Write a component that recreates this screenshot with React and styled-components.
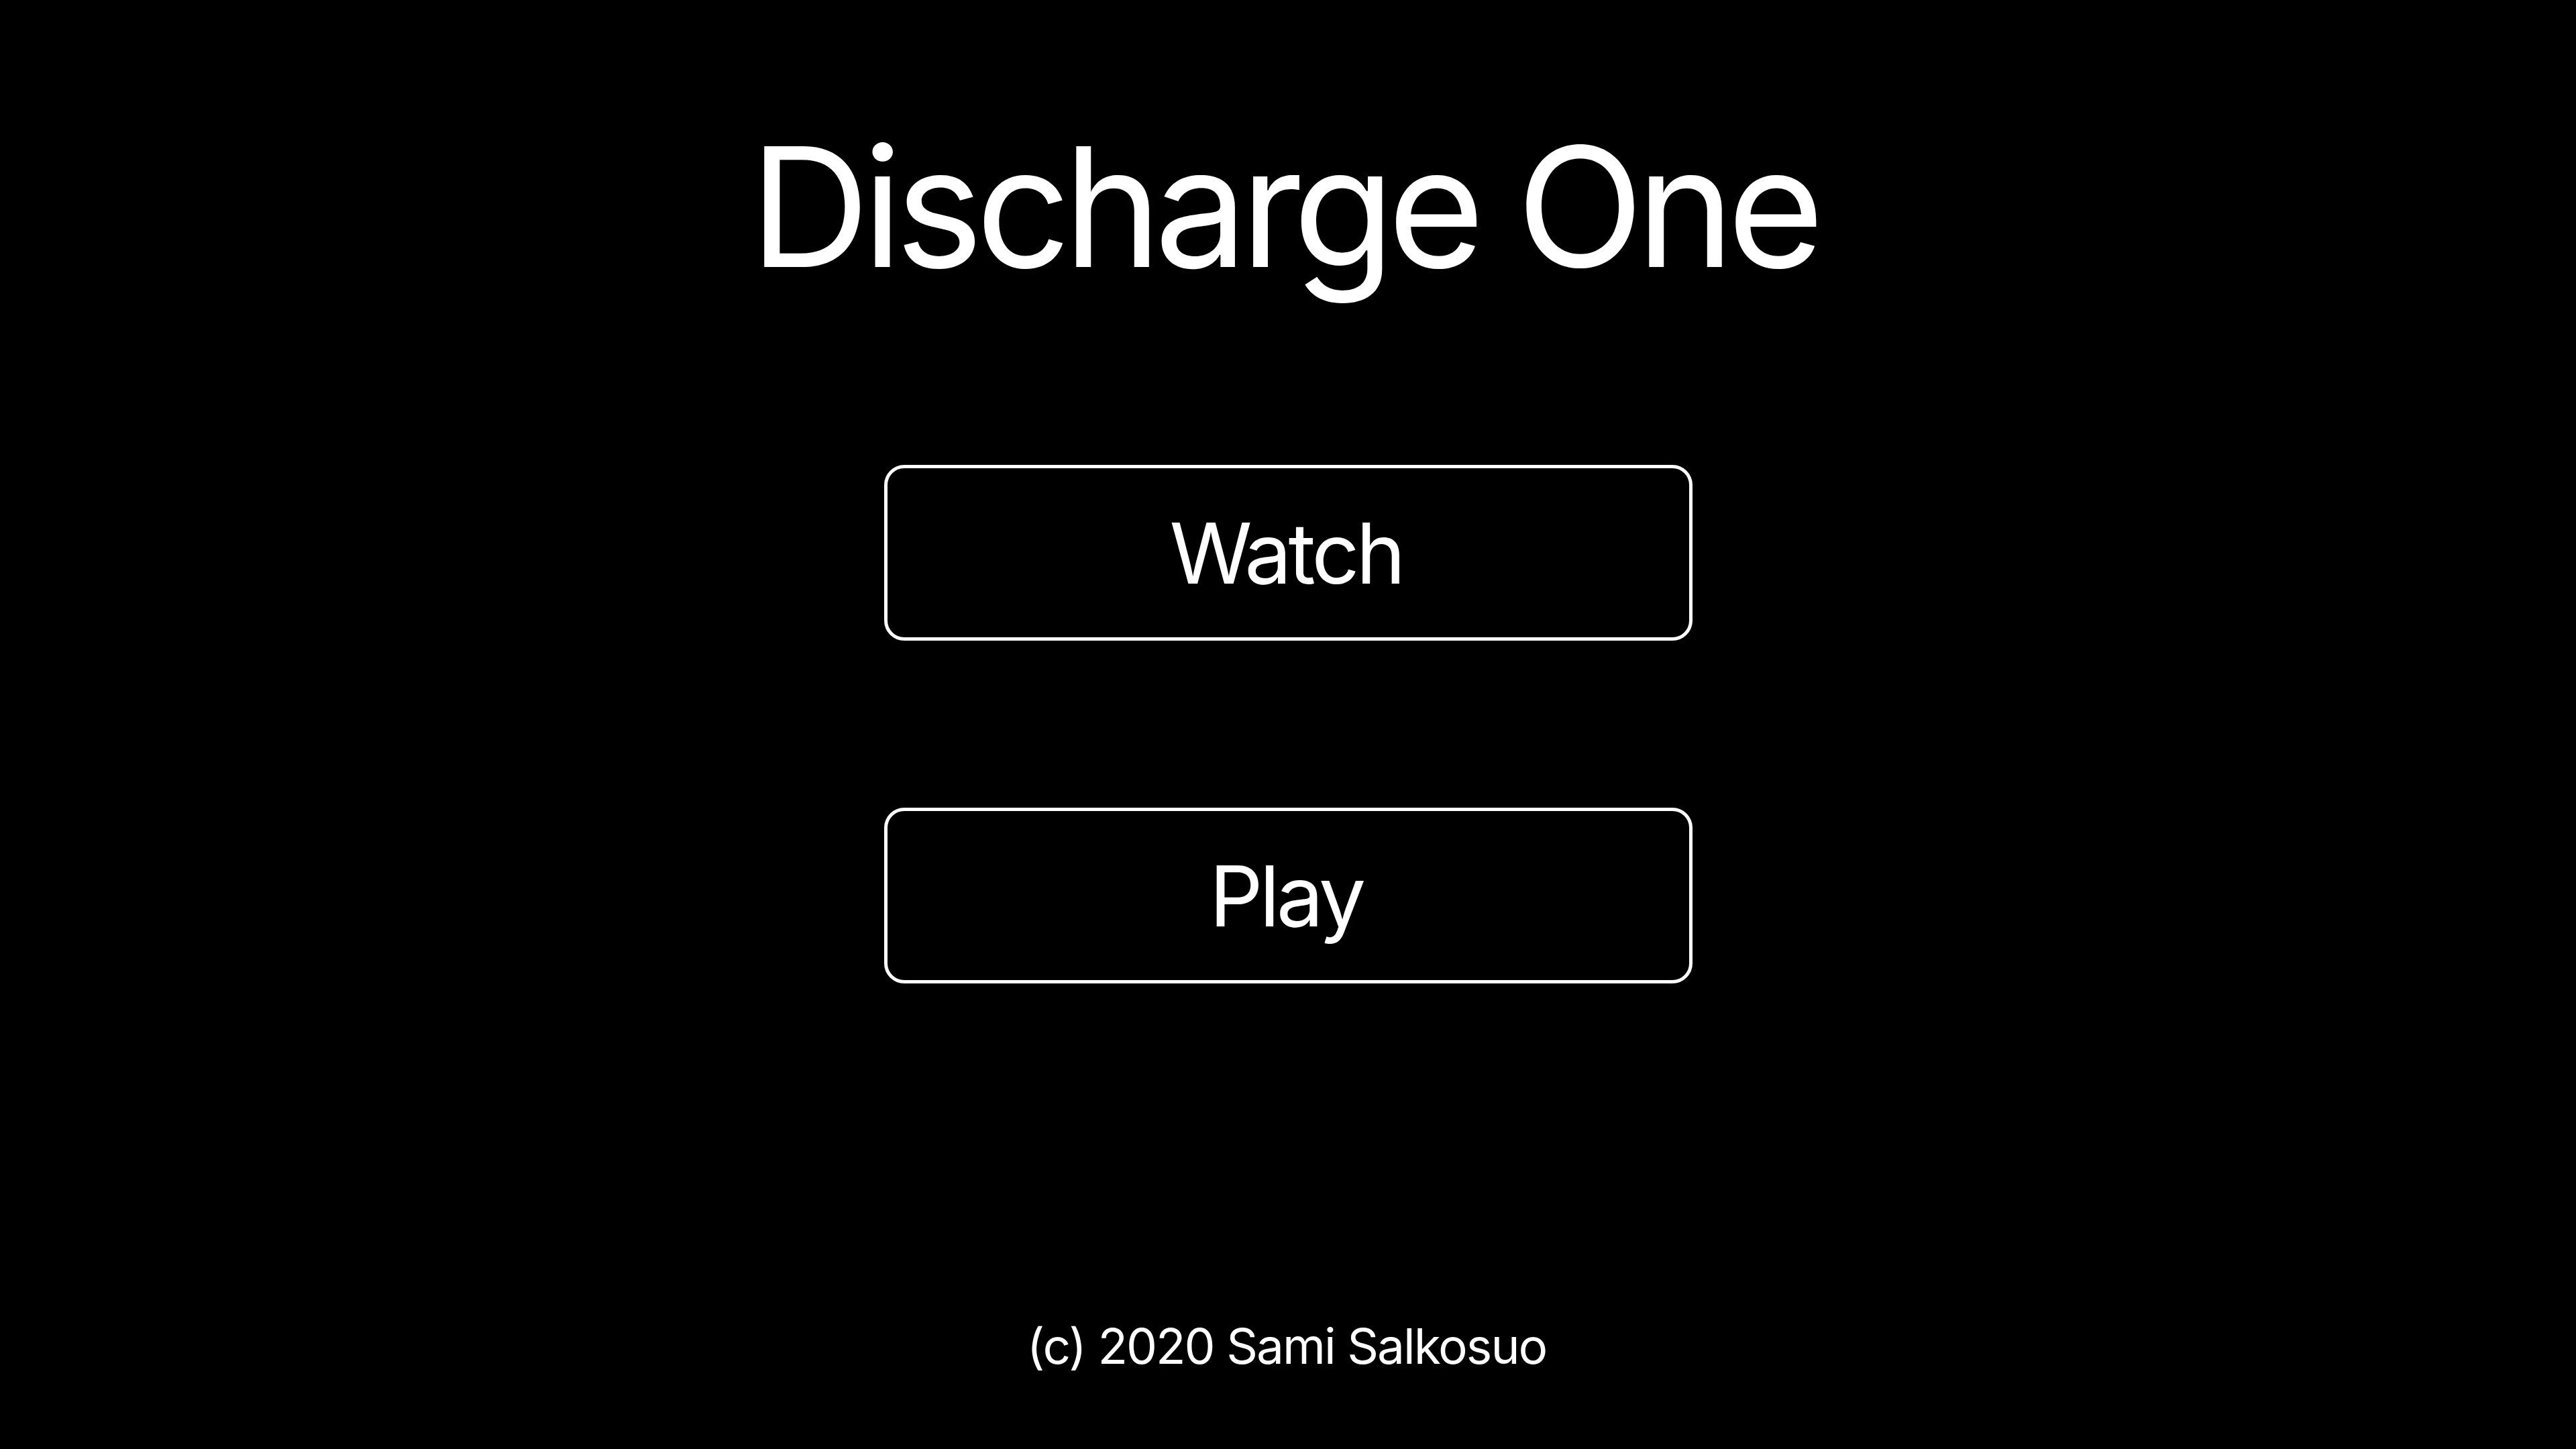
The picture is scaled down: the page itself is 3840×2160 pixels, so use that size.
import React from "react";
import styled, { createGlobalStyle } from "styled-components";

const GlobalStyle = createGlobalStyle`
  html, body {
    margin: 0;
    padding: 0;
    background-color: #000;
  }
  body {
    font-family: Inter, "Noto Sans", "Liberation Sans", sans-serif;
    color: #fff;
  }
`;

const StyledPage = styled.div`
  min-height: 100vh;
  display: flex;
  flex-direction: column;
  align-items: center;
  box-sizing: border-box;
  padding: 184px 0 117px;
`;

const StyledTitle = styled.h1`
  margin: 0;
  padding-right: 14px;
  font-size: 248px;
  line-height: 248px;
  font-weight: 400;
  letter-spacing: -11px;
`;

const StyledMenu = styled.div`
  display: flex;
  flex-direction: column;
  gap: 249px;
  margin-top: 261px;
`;

const StyledButton = styled.button`
  width: 1205px;
  height: 262px;
  box-sizing: border-box;
  display: flex;
  align-items: center;
  justify-content: center;
  background: #000;
  color: #fff;
  border: 5px solid #fff;
  border-radius: 30px;
  font-family: inherit;
  font-size: 125px;
  font-weight: 400;
  letter-spacing: -5px;
  cursor: pointer;
  padding: 0 6px 0 0;
  transition: all 0.2s;
  &:hover {
    background: #111;
  }
`;

const StyledFooter = styled.p`
  margin: auto 0 0;
  padding-right: 4px;
  font-size: 73px;
  line-height: 73px;
  font-weight: 400;
  letter-spacing: -2px;
`;

const App = () => {
  return (
    <>
      <GlobalStyle />
      <StyledPage>
        <StyledTitle>Discharge One</StyledTitle>
        <StyledMenu>
          <StyledButton>Watch</StyledButton>
          <StyledButton>Play</StyledButton>
        </StyledMenu>
        <StyledFooter>(c) 2020 Sami Salkosuo</StyledFooter>
      </StyledPage>
    </>
  );
};

export default App;
